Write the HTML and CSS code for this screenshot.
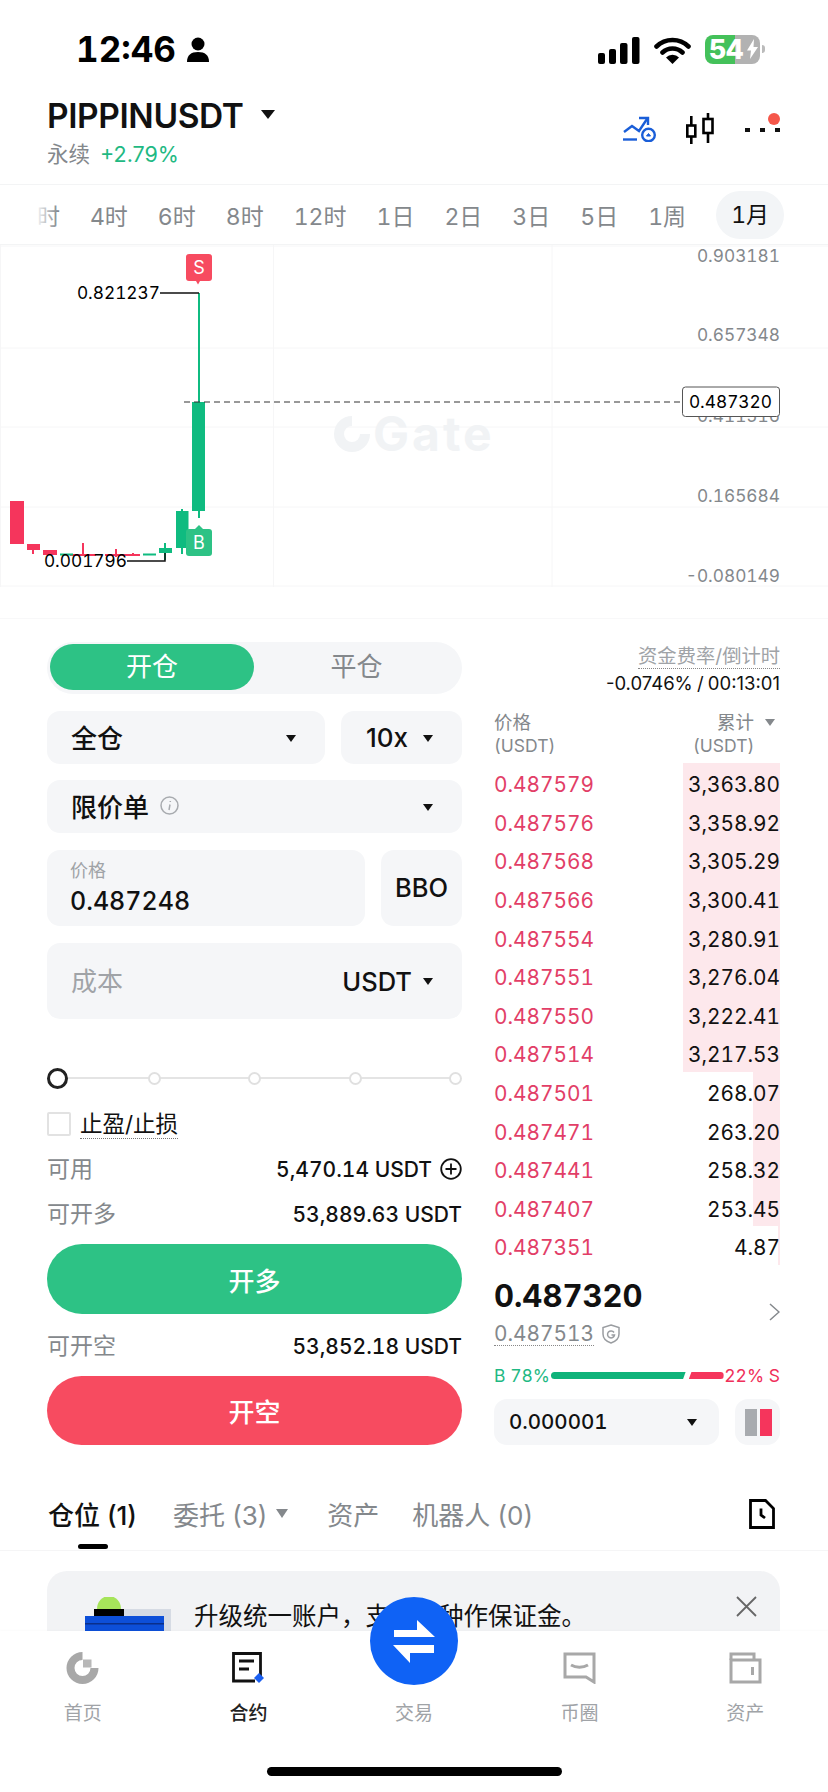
FILE: index.html
```html
<!DOCTYPE html>
<html lang="zh">
<head>
  <meta charset="utf-8">
  <title>PIPPINUSDT</title>
  <link rel="stylesheet" href="styles.css">
</head>
<body>
<div class="phone">

  <div class="status">
    <div class="status-left">
      <span class="time">12:46</span>
      <svg width="24" height="25" viewBox="0 0 24 25"><circle cx="12" cy="7" r="6.500" fill="#000"/><path d="M1 25c0-7 4-10 11-10s11 3 11 10z" fill="#000"/></svg>
    </div>
    <div class="status-right">
      <svg width="42" height="27" viewBox="0 0 42 27"><rect x="0" y="16" width="7" height="11" rx="2"/><rect x="11" y="12" width="7" height="15" rx="2"/><rect x="22" y="6" width="7.500" height="21" rx="2"/><rect x="34" y="0" width="7.500" height="27" rx="2"/></svg>
      <svg class="wifi" width="37" height="27" viewBox="0 0 37 27"><path d="M2.500 9.500a23 23 0 0 1 32 0M8.500 15.500a14.500 14.500 0 0 1 20 0" fill="none" stroke="#000" stroke-width="4.600" stroke-linecap="round"/><path d="M18.500 27l-6.500-6.500a9 9 0 0 1 13 0z"/></svg>
      <div class="battery"><span class="battery-num">54</span>
        <svg class="bolt" width="11" height="20" viewBox="0 0 11 20"><path d="M7 0L0 11.500h4L3 20l8-12H6.500z" fill="#fff"/></svg>
      </div>
      <span class="battery-nub"></span>
    </div>
  </div>

  <header class="head">
    <div>
      <div class="symbol">PIPPINUSDT <i class="arrow big"></i></div>
      <div class="sub"><span>永续</span><span class="up">+2.79%</span></div>
    </div>
    <div class="head-icons">
      <svg width="33" height="26" viewBox="0 0 33 26" fill="none" stroke="#1a5ed8" stroke-width="2.400"><path d="M1 16l8-6 7 5 8-12"/><path d="M16 2h9v7"/><path d="M0 23.500h14"/><circle cx="25.500" cy="19" r="6.300"/><path d="M23.500 20h4l-2-2.500z" fill="#1a5ed8" stroke-width="1"/></svg>
      <svg width="29" height="32" viewBox="0 0 29 32" fill="none" stroke="#000" stroke-width="2.600"><rect x="1.300" y="12.500" width="8" height="11"/><rect x="17.500" y="6" width="9" height="14"/><path d="M5.300 3v9.500M5.300 23.500V31M22 0v6M22 20v10"/></svg>
      <div class="more"><i></i><i></i><i></i><b></b></div>
    </div>
  </header>

  <nav class="frames">
    <span class="first">2时</span><span>4时</span><span>6时</span><span>8时</span><span>12时</span><span>1日</span><span>2日</span><span>3日</span><span>5日</span><span>1周</span><span class="on">1月</span>
  </nav>

  <section class="chart">
    <svg width="828" height="342" viewBox="0 0 828 342">
      <path class="grid" d="M0 1H828M0 103H828M0 182H828M0 262H828M0 341H828M.5 0V342M273.500 0V342M552 0V342"/>
      <!-- watermark -->
      <path class="mark" d="M352 171a18 18 0 1 0 18 18h-10a8 8 0 1 1-8-8z"/>
      <text class="mark-text" x="373" y="206">Gate</text>
      <text class="axis" x="780" y="17">0.903181</text>
      <text class="axis" x="780" y="96">0.657348</text>
      <text class="axis" x="780" y="177">0.411516</text>
      <text class="axis" x="780" y="257">0.165684</text>
      <text class="axis" x="780" y="337">-0.080149</text>
      <!-- candles -->
      <g class="down">
        <rect x="10" y="256" width="14" height="43"/>
        <rect x="27" y="299" width="13" height="6"/><path d="M33 299v10"/>
        <rect x="43" y="305" width="14" height="5"/>
        <path d="M83 298v12M116 304v8M133 308v3M126 310h14M70 310h26M105 310h22"/>
      </g>
      <g class="rise">
        <path d="M60 309.500h13M199 48v225M182 264v45M165 298v17"/>
        <rect x="143" y="308.500" width="13" height="2"/>
        <rect x="159" y="303" width="13" height="5"/>
        <rect x="176" y="266" width="12.500" height="37"/>
        <rect x="192" y="157" width="13" height="109"/>
      </g>
      <path class="lead" d="M160 48h39M127 316h38v-8"/>
      <text class="tag" x="160" y="54">0.821237</text>
      <text class="tag" x="127" y="322">0.001796</text>
      <path class="dash" d="M184 157H682"/>
      <!-- trade marks -->
      <rect class="sell" x="186" y="9" width="26" height="27" rx="3"/><path class="sell" d="M196 36h4l-2 3.500z"/>
      <text class="mark-letter" x="199" y="29">S</text>
      <rect class="buy" x="186" y="284" width="26" height="27" rx="3"/><path class="buy" d="M195 284h8l-4-4z"/>
      <text class="mark-letter" x="199" y="304">B</text>
      <rect class="last-box" x="682.500" y="142" width="97" height="29.500" rx="3"/>
      <text class="tag" x="772" y="163">0.487320</text>
    </svg>
  </section>

  <main class="trade">
    <div class="form">
      <div class="toggle"><span class="toggle-on">开仓</span><span class="toggle-off">平仓</span></div>

      <div class="line line-a">
        <div class="field pick grow"><span>全仓</span><i class="arrow"></i></div>
        <div class="field pick lever"><span>10x</span><i class="arrow"></i></div>
      </div>
      <div class="line line-b">
        <div class="field pick grow">
          <span class="with-info">限价单
            <svg width="19" height="19" viewBox="0 0 19 19" fill="none" stroke="#a8abaf" stroke-width="1.500"><circle cx="9.500" cy="9.500" r="8.500"/><path d="M10 8.500L9 14M10.300 5v1"/></svg>
          </span>
          <i class="arrow"></i>
        </div>
      </div>
      <div class="line line-c">
        <div class="field price grow"><small>价格</small><span>0.487248</span></div>
        <div class="field bbo">BBO</div>
      </div>
      <div class="line line-c">
        <div class="field pick cost grow"><span class="hint">成本</span><span class="unit">USDT <i class="arrow"></i></span></div>
      </div>

      <div class="slider"><i class="knob-main"></i><i></i><i></i><i></i><i></i></div>

      <label class="stop"><i class="check"></i><span>止盈/止损</span></label>

      <div class="kv kv-first"><span>可用</span><b>5,470.14 USDT
        <svg width="22" height="22" viewBox="0 0 22 22" fill="none" stroke="#111" stroke-width="1.800"><circle cx="11" cy="11" r="9.800"/><path d="M11 5.500v11M5.500 11h11"/></svg></b></div>
      <div class="kv"><span>可开多</span><b>53,889.63 USDT</b></div>
      <button class="btn btn-long">开多</button>
      <div class="kv kv-short"><span>可开空</span><b>53,852.18 USDT</b></div>
      <button class="btn btn-short">开空</button>
    </div>

    <div class="book">
      <div class="funding">
        <div><span class="dotted">资金费率/倒计时</span></div>
        <div class="funding-val">-0.0746% / 00:13:01</div>
      </div>
      <div class="book-head">
        <div>价格<br><small>(USDT)</small></div>
        <div class="right">累计 <i class="arrow gray"></i><br><small class="usdt-r">(USDT)</small></div>
      </div>
      <div class="rows">
        <div class="row deep"><span>0.487579</span><span>3,363.80</span></div>
        <div class="row deep"><span>0.487576</span><span>3,358.92</span></div>
        <div class="row deep"><span>0.487568</span><span>3,305.29</span></div>
        <div class="row deep"><span>0.487566</span><span>3,300.41</span></div>
        <div class="row deep"><span>0.487554</span><span>3,280.91</span></div>
        <div class="row deep"><span>0.487551</span><span>3,276.04</span></div>
        <div class="row deep"><span>0.487550</span><span>3,222.41</span></div>
        <div class="row deep"><span>0.487514</span><span>3,217.53</span></div>
        <div class="row mid"><span>0.487501</span><span>268.07</span></div>
        <div class="row mid"><span>0.487471</span><span>263.20</span></div>
        <div class="row mid"><span>0.487441</span><span>258.32</span></div>
        <div class="row mid"><span>0.487407</span><span>253.45</span></div>
        <div class="row thin"><span>0.487351</span><span>4.87</span></div>
      </div>
      <div class="last">
        <div>
          <div class="last-price">0.487320</div>
          <div class="mark-price"><span class="dotted">0.487513</span>
            <svg width="18" height="20" viewBox="0 0 18 20" fill="none" stroke="#9a9da1" stroke-width="1.500"><path d="M9 1l8 2.500V10c0 5-3.500 7.500-8 9-4.500-1.500-8-4-8-9V3.500z"/><path d="M12 8.500a3.500 3.500 0 1 0 .5 2.500H9.500"/></svg>
          </div>
        </div>
        <svg width="11" height="18" viewBox="0 0 11 18" fill="none" stroke="#84888c" stroke-width="1.500"><path d="M1 1l9 8-9 8"/></svg>
      </div>
      <div class="ratio">
        <span class="up">B 78%</span>
        <div class="bars"><i class="bar-b"></i><i class="bar-s"></i></div>
        <span class="dn">22% S</span>
      </div>
      <div class="line depth">
        <div class="field pick grow"><span>0.000001</span><i class="arrow"></i></div>
        <div class="field layout"><i class="lay-g"></i><i class="lay-r"></i></div>
      </div>
    </div>
  </main>

  <div class="tabs">
    <span class="tab tab-on">仓位 (1)</span>
    <span class="tab">委托 (3)</span><i class="arrow gray tab-arrow"></i>
    <span class="tab">资产</span>
    <span class="tab">机器人 (0)</span>
    <svg class="history" width="26" height="30" viewBox="0 0 26 30" fill="none" stroke="#000" stroke-width="2.800"><path d="M1.500 1.500h15l8 8v19h-23z"/><path d="M12 9.500V16l4 3"/></svg>
  </div>

  <div class="banner">
    <svg class="art" width="86" height="34" viewBox="0 0 86 34"><path d="M12 12a12 13 0 0 1 24 0z" fill="#a6e45a"/><rect x="32" y="12" width="54" height="22" fill="#d6dbe4"/><rect x="9" y="12" width="30" height="8" fill="#000"/><rect y="19" width="79" height="15" fill="#0d4fd8"/><rect y="26" width="79" height="1.500" fill="#0a2f8a"/></svg>
    <p>升级统一账户，支持多种作保证金。</p>
    <svg class="close" width="21" height="21" viewBox="0 0 21 21" fill="none" stroke="#666" stroke-width="1.800"><path d="M1 1l19 19M20 1L1 20"/></svg>
  </div>

  <footer class="nav">
    <div class="nav-item">
      <svg width="33" height="32" viewBox="0 0 33 32"><path d="M16.500 0a16 16 0 1 0 16 16h-8a8 8 0 1 1-8-8z" fill="#a8a8a8"/><rect x="17" y="7.500" width="8.500" height="8" fill="#b8b8b8"/></svg>
      <span>首页</span>
    </div>
    <div class="nav-item nav-on">
      <svg width="33" height="32" viewBox="0 0 33 32"><path d="M23 29H1.500V1.500h27V24" fill="none" stroke="#111" stroke-width="2.800"/><path d="M7 9h15M7 17h10" stroke="#111" stroke-width="2.800"/><path d="M27 21l5 5-5 5-5-5z" fill="#1a5ff0"/></svg>
      <span>合约</span>
    </div>
    <div class="nav-item">
      <div class="nav-gap"></div>
      <span>交易</span>
    </div>
    <div class="nav-item">
      <svg width="33" height="32" viewBox="0 0 33 32" fill="none" stroke="#a8a8a8" stroke-width="3"><path d="M2 2h29v28l-8-5H2z"/><path d="M8 13c5 3 12 3 17 0"/></svg>
      <span>币圈</span>
    </div>
    <div class="nav-item">
      <svg width="33" height="32" viewBox="0 0 33 32" fill="none" stroke="#a8a8a8" stroke-width="3"><path d="M2 8V2h23v6"/><path d="M2 8h29v22H2z"/><path d="M23.500 15v8"/></svg>
      <span>资产</span>
    </div>
    <div class="swap">
      <svg width="88" height="88" viewBox="0 0 88 88"><path d="M24 33h23V23l18 17H24zM23 48h41v8H40v10z" fill="#fff"/></svg>
    </div>
    <div class="home-bar"></div>
  </footer>

</div>
</body>
</html>
```

FILE: styles.css
```css
* {
  box-sizing: border-box;
}
body {
  margin: 0;
  background: #fff;
  color: #111;
  font-family: Inter, "Noto Sans CJK SC", sans-serif;
  font-variant-numeric: tabular-nums;
}
i {
  display: block;
  font-style: normal;
}
.phone {
  position: relative;
  width: 828px;
  height: 1792px;
  overflow: hidden;
  background: #fff;
}

/* status bar */
.status {
  height: 84px;
  padding: 32px 63px 0 76px;
  display: flex;
  justify-content: space-between;
  align-items: flex-start;
}
.status-left {
  display: flex;
  align-items: center;
  gap: 10px;
}
.time {
  font-size: 35px;
  font-weight: 700;
  line-height: 34px;
  color: #000;
}
.status-right {
  display: flex;
  align-items: center;
  gap: 14px;
  margin-top: 5px;
}
.battery {
  position: relative;
  width: 55px;
  height: 29px;
  margin-top: -3px;
  border-radius: 8px;
  background: linear-gradient(to right, #44c15a 30px, #b2b2b2 30px);
  display: flex;
  align-items: center;
  padding-left: 4px;
}
.battery-num {
  color: #fff;
  font-size: 27px;
  font-weight: 800;
  line-height: 29px;
  letter-spacing: -.5px;
}
.bolt {
  margin-left: 4px;
}
.battery-nub {
  width: 3px;
  height: 8px;
  margin: -3px 0 0 -12px;
  background: #bbb;
  border-radius: 0 3px 3px 0;
}

/* symbol header */
.head {
  height: 101px;
  padding: 13px 48px 0 47px;
  display: flex;
  justify-content: space-between;
  border-bottom: 1px solid #f3f4f5;
}
.symbol {
  display: flex;
  align-items: center;
  font-size: 33.500px;
  font-weight: 600;
  line-height: 38px;
  gap: 17px;
  letter-spacing: -.4px;
}
.sub {
  margin-top: 5px;
  display: flex;
  gap: 10px;
  font-size: 21.500px;
  line-height: 28px;
  color: #84888c;
  font-variant-numeric: normal;
}
.up {
  color: #1fb983;
}
.dn {
  color: #ef2f5a;
}
.head-icons {
  display: flex;
  gap: 30px;
  align-items: flex-start;
  padding-top: 19px;
}
.head-icons svg:nth-child(2) {
  margin-top: -3px;
}
.more {
  position: relative;
  display: flex;
  gap: 10px;
  padding-top: 12px;
}
.more i {
  width: 5px;
  height: 4px;
  background: #111;
}
.more b {
  position: absolute;
  right: 0;
  top: -3px;
  width: 12px;
  height: 12px;
  border-radius: 50%;
  background: #f5574a;
}
.arrow {
  width: 0;
  height: 0;
  border-left: 5px solid transparent;
  border-right: 5px solid transparent;
  border-top: 7px solid #111;
}
.arrow.big {
  border-left-width: 7px;
  border-right-width: 7px;
  border-top-width: 9px;
  margin-top: -4px;
}
.arrow.gray {
  border-top-color: #84888c;
}

/* timeframe strip */
.frames {
  position: relative;
  height: 60px;
  padding: 5px 48px 5px 35px;
  display: flex;
  align-items: center;
  gap: 30px;
  font-size: 23px;
  color: #84888c;
  border-bottom: 1px solid #f3f4f5;
  white-space: nowrap;
}
.frames::before {
  content: "";
  position: absolute;
  left: 0;
  top: 0;
  bottom: 0;
  width: 58px;
  background: linear-gradient(to right, #fff 60%, rgba(255, 255, 255, 0));
}
.frames .first {
  margin-left: -13px;
}
.frames .on {
  margin-left: auto;
  padding: 0 15px;
  height: 48px;
  line-height: 48px;
  border-radius: 24px;
  background: #f3f5f7;
  color: #111;
}

/* chart */
.chart {
  height: 374px;
  border-bottom: 1px solid #f8f8f9;
}
.chart svg {
  display: block;
}
.grid {
  fill: none;
  stroke: #f6f6f7;
  stroke-width: 1;
}
.mark {
  fill: #f1f3f5;
}
.mark-text {
  font-size: 48px;
  font-weight: 700;
  letter-spacing: 3px;
  fill: #f1f3f5;
}
.axis {
  font-size: 17.300px;
  fill: #84888c;
  text-anchor: end;
}
.tag {
  font-size: 17.300px;
  fill: #000;
  text-anchor: end;
}
.down {
  fill: #f5355c;
  stroke: none;
}
.down path {
  stroke: #f5355c;
  stroke-width: 2;
}
.rise {
  fill: #0fbb80;
}
.rise path {
  stroke: #0fbb80;
  stroke-width: 2;
}
.lead {
  fill: none;
  stroke: #111;
  stroke-width: 1.500;
}
.dash {
  stroke: #333;
  stroke-width: 1.200;
  stroke-dasharray: 6 4;
}
.sell {
  fill: #f74b60;
}
.buy {
  fill: #2dc285;
}
.mark-letter {
  font-size: 18px;
  fill: #fff;
  text-anchor: middle;
}
.last-box {
  fill: #fff;
  stroke: #555;
  stroke-width: 1;
}

/* order form + book */
.trade {
  margin-top: 23px;
  padding: 0 48px 0 47px;
  display: grid;
  grid-template-columns: 415px 286px;
  column-gap: 32px;
}
.toggle {
  height: 52px;
  padding: 2px 3px;
  display: flex;
  background: #f5f6f8;
  border-radius: 26px;
  font-size: 26px;
  line-height: 46px;
  text-align: center;
}
.toggle-on {
  width: 204px;
  height: 46px;
  border-radius: 23px;
  background: #2dc285;
  color: #fff;
}
.toggle-off {
  flex: 1;
  color: #84888c;
}
.line {
  display: flex;
}
.line-a {
  margin-top: 17px;
  gap: 16px;
  height: 53px;
}
.line-b {
  margin-top: 16px;
  height: 53px;
}
.line-c {
  margin-top: 17px;
  gap: 16px;
  height: 76px;
}
.field {
  background: #f5f6f8;
  border-radius: 13px;
  font-size: 26px;
  font-weight: 500;
}
.grow {
  flex: 1;
}
.pick {
  padding: 0 29px 0 24px;
  display: flex;
  align-items: center;
  justify-content: space-between;
}
.pick > span:first-child {
  margin-top: -3px;
}
.pick .arrow {
  margin-top: 1px;
}
.lever {
  width: 121px;
  padding-left: 25px;
  padding-right: 29px;
  font-variant-numeric: normal;
}
.lever > span:first-child {
  margin-top: 0;
}
.with-info {
  display: flex;
  align-items: center;
  gap: 11px;
}
.price {
  padding: 8px 23px;
  display: flex;
  flex-direction: column;
  line-height: 34px;
  font-size: 25px;
}
.price small {
  font-size: 18px;
  font-weight: 400;
  line-height: 26px;
  color: #a0a3a7;
}
.bbo {
  width: 81px;
  text-align: center;
  line-height: 76px;
  font-size: 25.500px;
}
.cost {
  padding-bottom: 0;
}
.hint {
  color: #a0a3a7;
  font-weight: 400;
}
.unit {
  display: flex;
  align-items: center;
  gap: 11px;
  font-size: 25.500px;
}
.slider {
  position: relative;
  margin-top: 48px;
  height: 22px;
  display: flex;
  align-items: center;
  justify-content: space-between;
}
.slider::before {
  content: "";
  position: absolute;
  left: 10px;
  right: 4px;
  top: 10px;
  height: 2px;
  background: #e4e4e4;
}
.slider i {
  position: relative;
  width: 13px;
  height: 13px;
  background: #fff;
  border: 2px solid #e0e0e0;
  border-radius: 50%;
}
.slider .knob-main {
  width: 21px;
  height: 21px;
  margin-right: -8px;
  border: 3px solid #222;
}
.stop {
  margin-top: 23px;
  display: flex;
  align-items: center;
  gap: 9px;
  height: 24px;
  font-size: 22.500px;
}
.check {
  width: 24px;
  height: 24px;
  border: 2px solid #e2e2e2;
  border-radius: 2px;
}
.stop span {
  line-height: 28px;
  border-bottom: 1.500px dotted #777;
}
.kv {
  margin-top: 15px;
  height: 30px;
  display: flex;
  justify-content: space-between;
  align-items: center;
  font-size: 23px;
  color: #84888c;
}
.kv > span {
  margin-top: -5px;
}
.kv b {
  display: flex;
  align-items: center;
  gap: 8px;
  font-size: 21px;
  font-weight: 500;
  color: #111;
}
.kv-first {
  margin-top: 18px;
}
.kv-short {
  margin-top: 17px;
}
.btn {
  display: block;
  width: 100%;
  margin-top: 15px;
  height: 70px;
  border: 0;
  border-radius: 35px;
  color: #fff;
  font: 500 26px Inter, "Noto Sans CJK SC", sans-serif;
}
.btn-long {
  background: #2dc285;
}
.btn-short {
  height: 69px;
  background: #f74b60;
}

.funding {
  text-align: right;
}
.funding > div:first-child {
  height: 30px;
  line-height: 28px;
  font-size: 19.300px;
  color: #a0a3a7;
}
.dotted {
  border-bottom: 1.500px dotted #888;
}
.funding-val {
  font-size: 18.500px;
  line-height: 22px;
  word-spacing: -1px;
  font-variant-numeric: normal;
}
.book-head {
  margin-top: 17px;
  height: 52px;
  display: flex;
  justify-content: space-between;
  font-size: 18.500px;
  line-height: 23px;
  color: #84888c;
}
.book-head small {
  font-size: 17.500px;
}
.book-head .right {
  position: relative;
  width: 87px;
  padding-left: 24px;
}
.book-head .right .arrow {
  position: absolute;
  right: 5px;
  top: 8px;
}
.usdt-r {
  margin-left: -24px;
}
.rows {
  font-size: 20.800px;
}
.row {
  height: 38.600px;
  padding-top: 5px;
  display: flex;
  justify-content: space-between;
  align-items: center;
}
.row span:first-child {
  color: #e23e67;
}
.row.deep {
  background: linear-gradient(to left, #fde8ec 97px, transparent 97px);
}
.row.mid {
  background: linear-gradient(to left, #fde8ec 27px, transparent 27px);
}
.row.thin {
  background: linear-gradient(to left, #fde8ec 2px, transparent 2px);
}
.last {
  margin-top: 13px;
  display: flex;
  justify-content: space-between;
  align-items: center;
}
.last-price {
  font-size: 31px;
  font-weight: 700;
  line-height: 36px;
}
.mark-price {
  margin-top: 8px;
  display: flex;
  align-items: center;
  gap: 8px;
  font-size: 20.800px;
  line-height: 23px;
  color: #84888c;
}
.ratio {
  margin-top: 18px;
  height: 24px;
  display: flex;
  justify-content: space-between;
  align-items: center;
  font-size: 17.500px;
  white-space: nowrap;
}
.bars {
  display: flex;
  flex: none;
  gap: 3px;
}
.bars i {
  height: 7.500px;
}
.bar-b {
  width: 135px;
  border-radius: 4px 0 0 4px;
  background: #0fb37a;
  clip-path: polygon(0 0, 100% 0, 98% 100%, 0 100%);
}
.bar-s {
  width: 35px;
  border-radius: 0 4px 4px 0;
  background: #f5355c;
  clip-path: polygon(8% 0, 100% 0, 100% 100%, 0 100%);
}
.depth {
  margin-top: 11px;
  height: 46px;
  gap: 16px;
}
.depth .pick {
  padding: 0 22px 0 15px;
  font-size: 20.500px;
}
.depth .pick > span:first-child {
  margin-top: 0;
}
.layout {
  width: 45px;
  padding: 10px 8px 9px 10px;
  display: flex;
  gap: 3px;
}
.layout i {
  width: 12px;
}
.lay-g {
  background: #a8abaf;
}
.lay-r {
  background: #f5355c;
}

/* position tabs */
.tabs {
  margin-top: 36px;
  height: 70px;
  padding: 0 48px 4px 48px;
  display: flex;
  align-items: center;
  border-bottom: 1px solid #f5f5f6;
  font-size: 26px;
  color: #84888c;
  font-variant-numeric: normal;
}
.tab {
  margin-right: 33px;
  white-space: nowrap;
}
.tab-on {
  position: relative;
  margin-right: 36px;
  color: #111;
  font-weight: 500;
}
.tab-on::after {
  content: "";
  position: absolute;
  left: 30px;
  bottom: -17px;
  width: 30px;
  height: 5px;
  border-radius: 3px;
  background: #000;
}
.tab-arrow {
  margin: 0 39px 0 -24px;
  border-left-width: 6px;
  border-right-width: 6px;
  border-top-width: 9px;
}
.history {
  margin-left: auto;
  margin-right: 5px;
}

.banner {
  margin: 20px 48px 0 47px;
  height: 100px;
  padding: 26px 23px 0 38px;
  display: flex;
  align-items: flex-start;
  background: #f2f3f5;
  border-radius: 20px;
}
.art {
  margin-right: 23px;
}
.banner p {
  flex: 1;
  margin: 0;
  font-size: 24.500px;
  line-height: 38px;
}
.close {
  margin-top: -1px;
}

/* bottom nav sits over the page */
.nav {
  position: absolute;
  left: 0;
  right: 0;
  top: 1631px;
  bottom: 0;
  display: flex;
  background: #fff;
  box-shadow: 0 -1px 2px rgba(0, 0, 0, .02);
}
.nav-item {
  flex: 1;
  padding-top: 21px;
  display: flex;
  flex-direction: column;
  align-items: center;
  font-size: 19px;
  color: #a0a3a7;
}
.nav-item span {
  margin-top: 16px;
  line-height: 28px;
}
.nav-on span {
  color: #222;
  font-weight: 500;
}
.nav-gap {
  height: 32px;
}
.swap {
  position: absolute;
  left: 370px;
  top: -34px;
  width: 88px;
  height: 88px;
  border-radius: 50%;
  background: #0f62f5;
}
.home-bar {
  position: absolute;
  left: 267px;
  bottom: 16px;
  width: 295px;
  height: 9px;
  border-radius: 5px;
  background: #000;
}
```
